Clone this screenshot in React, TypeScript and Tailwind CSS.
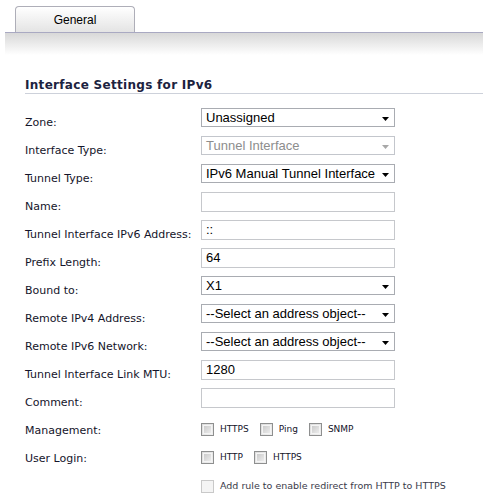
import React from "react";

const Arrow = ({ disabled }: { disabled?: boolean }) => (
  <svg width="7" height="4" viewBox="0 0 7 4" className="absolute right-[5px] top-[8px]">
    <polygon points="0,0 7,0 3.5,4" fill={disabled ? "#a8a8a8" : "#000"} />
  </svg>
);

const Select = ({ value, disabled }: { value: string; disabled?: boolean }) => (
  <div
    className={`relative w-[194px] h-[19px] border bg-white pl-[4px] leading-[17px] text-[13px] font-['Liberation_Sans',Arial,sans-serif] whitespace-nowrap overflow-hidden ${
      disabled ? "border-[#c3c6cc] text-[#8d8d8d]" : "border-[#a9acb2] text-black"
    }`}
  >
    {value}
    <Arrow disabled={disabled} />
  </div>
);

const Input = ({ value }: { value?: string }) => (
  <div className="w-[194px] h-[20px] border border-[#c6c8cc] bg-white pl-[4px] leading-[18px] text-[13px] font-['Liberation_Sans',Arial,sans-serif] text-black whitespace-nowrap overflow-hidden">
    {value}
  </div>
);

const Check = ({ disabled }: { disabled?: boolean }) => (
  <div
    className={`w-[13px] h-[13px] border shrink-0 ${
      disabled ? "border-[#c9c9c9] bg-[#f4f4f4]" : "border-[#8e8f8f] bg-linear-to-br from-[#dcdcdc] to-[#f0f0f0]"
    }`}
  >
    {!disabled && <div className="m-[1px] w-[9px] h-[9px] border border-[#f4f4f4] bg-linear-to-br from-[#cbcbcb] to-[#ececec]" />}
  </div>
);

const Row = ({ label, children }: { label: string; children: React.ReactNode }) => (
  <div className="flex h-[28px] items-start">
    <div className="w-[176px] pt-[8px] leading-[14px] text-[11px] text-[#14142a] whitespace-nowrap">{label}</div>
    {children}
  </div>
);

const CheckLabel = ({ label, disabled }: { label: string; disabled?: boolean }) => (
  <div className="flex items-center gap-[6px] mr-[11px]">
    <Check disabled={disabled} />
    <span className={`text-[9px] leading-[13px] ${disabled ? "text-[#3a3a4a]" : "text-[#14142a]"}`}>{label}</span>
  </div>
);

export default function App() {
  return (
    <div className="w-[483px] h-[496px] bg-white overflow-hidden font-['DejaVu_Sans',Verdana,sans-serif]">
      <div className="pl-[15px] pt-[6px] flex">
        <div className="w-[120px] h-[26px] border border-b-0 border-[#aeaeb8] rounded-t-[4px] bg-linear-to-b from-white to-[#e4e4e4] flex items-center justify-center text-[12px] text-black font-['Liberation_Sans',Arial,sans-serif]">
          General
        </div>
      </div>
      <div className="ml-[5px] h-px bg-[#a9a9c2]" />
      <div className="ml-[5px] h-[22px] bg-linear-to-b from-[#d8d8d8] to-white" />
      <div className="ml-[25px] mt-[23px] border-b border-[#cdd1da] leading-[15px] text-[12px] font-bold tracking-[0.3px] text-[#1c2340]">
        Interface Settings for IPv6
      </div>
      <div className="ml-[25px] mt-[14px] flex flex-col">
        <Row label="Zone:">
          <Select value="Unassigned" />
        </Row>
        <Row label="Interface Type:">
          <Select value="Tunnel Interface" disabled />
        </Row>
        <Row label="Tunnel Type:">
          <Select value="IPv6 Manual Tunnel Interface" />
        </Row>
        <Row label="Name:">
          <Input />
        </Row>
        <Row label="Tunnel Interface IPv6 Address:">
          <Input value="::" />
        </Row>
        <Row label="Prefix Length:">
          <Input value="64" />
        </Row>
        <Row label="Bound to:">
          <Select value="X1" />
        </Row>
        <Row label="Remote IPv4 Address:">
          <Select value="--Select an address object--" />
        </Row>
        <Row label="Remote IPv6 Network:">
          <Select value="--Select an address object--" />
        </Row>
        <Row label="Tunnel Interface Link MTU:">
          <Input value="1280" />
        </Row>
        <Row label="Comment:">
          <Input />
        </Row>
        <div className="flex h-[28px] items-start mt-[7px]">
          <div className="w-[176px] pt-[1px] leading-[14px] text-[11px] text-[#14142a]">Management:</div>
          <div className="flex">
            <CheckLabel label="HTTPS" />
            <CheckLabel label="Ping" />
            <CheckLabel label="SNMP" />
          </div>
        </div>
        <div className="flex h-[28px] items-start">
          <div className="w-[176px] pt-[1px] leading-[14px] text-[11px] text-[#14142a]">User Login:</div>
          <div className="flex">
            <CheckLabel label="HTTP" />
            <CheckLabel label="HTTPS" />
          </div>
        </div>
        <div className="flex items-start">
          <div className="w-[176px]" />
          <div className="flex items-center gap-[6px]">
            <Check disabled />
            <span className="text-[9.5px] leading-[14px] text-[#3a3a4a]">Add rule to enable redirect from HTTP to HTTPS</span>
          </div>
        </div>
      </div>
    </div>
  );
}
